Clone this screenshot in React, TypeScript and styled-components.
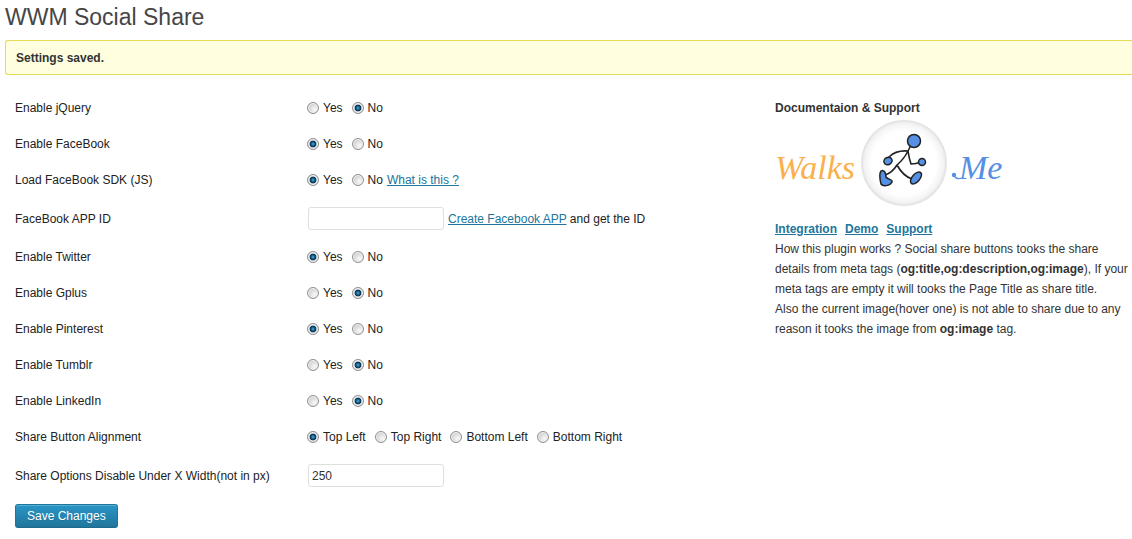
import React from "react";
import styled, { createGlobalStyle } from "styled-components";

const GlobalStyle = createGlobalStyle`
  *, *::before, *::after { box-sizing: border-box; }
  body {
    margin: 0;
    background: #fff;
    color: #333;
    font-family: "Liberation Sans", Arial, sans-serif;
    font-size: 12px;
    line-height: 20px;
  }
`;

const Page = styled.main`
  padding-left: 5px;
  overflow-x: hidden;
`;

const Title = styled.h1`
  margin: 0;
  padding-top: 2px;
  color: #464646;
  font-size: 23px;
  line-height: 30px;
  font-weight: 400;
`;

const Notice = styled.p`
  margin: 8px 0 15px;
  padding: 7px 10px 6px;
  border: 1px solid #e6db55;
  border-right: 0;
  border-radius: 3px 0 0 3px;
  background: #ffffe0;
  font-weight: 700;
`;

const Columns = styled.div`
  display: grid;
  grid-template-columns: 760fr 357fr;
  padding-left: 10px;
`;

const Row = styled.div<{ $tall?: boolean }>`
  display: grid;
  grid-template-columns: 292px 1fr;
  align-items: center;
  min-height: ${({ $tall }) => ($tall ? 41 : 36)}px;
  color: #222;
`;

const RowName = styled.div``;

const Field = styled.div`
  display: flex;
  align-items: center;
`;

const Option = styled.label`
  display: flex;
  align-items: center;
  gap: 4px;
  margin-right: 9px;

  &:last-of-type {
    margin-right: 4px;
  }
`;

const Radio = styled.input`
  appearance: none;
  width: 12px;
  height: 12px;
  margin: 0;
  border: 1px solid #8e8f8f;
  border-radius: 50%;
  background: radial-gradient(circle at 65% 65%, #f4f4f4 10%, #d2d4d6 60%);
  box-shadow: inset 0 0 0 1px #f4f4f4;

  &:checked {
    background: radial-gradient(
      circle closest-side at 50% 50%,
      #4fb4e0 0,
      #1a76a6 25%,
      #0d2f4a 58%,
      #c9d2d8 74%
    );
  }
`;

const TextInput = styled.input`
  width: 136px;
  height: 23px;
  margin: 0 4px 0 1px;
  padding: 2px 3px;
  border: 1px solid #dfdfdf;
  border-radius: 3px;
  background: #fff;
  color: #333;
  font: inherit;
  line-height: 16px;
`;

const Link = styled.a`
  color: #21759b;
`;

const Save = styled.button`
  height: 24px;
  margin: 8px 0;
  padding: 0 11px;
  border: 1px solid #21759b;
  border-bottom-color: #1e6a8d;
  border-radius: 3px;
  background: linear-gradient(#2a95c5, #21759b);
  box-shadow: inset 0 1px 0 rgba(120, 200, 230, 0.5);
  color: #fff;
  font: inherit;
  line-height: 22px;
  text-shadow: 0 1px 0 rgba(0, 0, 0, 0.1);
`;

const Aside = styled.aside`
  padding-top: 8px;
`;

const AsideTitle = styled.h2`
  margin: 0;
  font-size: 12px;
  line-height: 20px;
`;

const Logo = styled.svg`
  display: block;
  width: 230px;
  height: 90px;
  margin: 1px 0 10px;
`;

const LogoWord = styled.text`
  font-family: "Liberation Serif", serif;
  font-size: 34px;
  font-style: italic;
`;

const Links = styled.nav`
  display: flex;
  gap: 8px;
  font-weight: 700;
`;

const About = styled.p`
  margin: 0;
`;

type Setting = {
  id: string;
  name: string;
  options?: string[];
  selected?: string;
  value?: string;
  extra?: React.ReactNode;
};

const yesNo = ["Yes", "No"];

const settings: Setting[] = [
  { id: "jquery", name: "Enable jQuery", options: yesNo, selected: "No" },
  { id: "facebook", name: "Enable FaceBook", options: yesNo, selected: "Yes" },
  {
    id: "sdk",
    name: "Load FaceBook SDK (JS)",
    options: yesNo,
    selected: "Yes",
    extra: <Link href="#sdk">What is this ?</Link>,
  },
  {
    id: "appid",
    name: "FaceBook APP ID",
    value: "",
    extra: (
      <span>
        <Link href="#create">Create Facebook APP</Link> and get the ID
      </span>
    ),
  },
  { id: "twitter", name: "Enable Twitter", options: yesNo, selected: "Yes" },
  { id: "gplus", name: "Enable Gplus", options: yesNo, selected: "No" },
  { id: "pinterest", name: "Enable Pinterest", options: yesNo, selected: "Yes" },
  { id: "tumblr", name: "Enable Tumblr", options: yesNo, selected: "No" },
  { id: "linkedin", name: "Enable LinkedIn", options: yesNo, selected: "No" },
  {
    id: "align",
    name: "Share Button Alignment",
    options: ["Top Left", "Top Right", "Bottom Left", "Bottom Right"],
    selected: "Top Left",
  },
  { id: "width", name: "Share Options Disable Under X Width(not in px)", value: "250" },
];

function SettingRow({ id, name, options, selected, value, extra }: Setting) {
  if (!options) {
    return (
      <Row $tall>
        <RowName as="label" htmlFor={id}>{name}</RowName>
        <Field>
          <TextInput id={id} type="text" defaultValue={value} />
          {extra}
        </Field>
      </Row>
    );
  }
  return (
    <Row role="radiogroup" aria-labelledby={id}>
      <RowName id={id}>{name}</RowName>
      <Field>
        {options.map((option) => (
          <Option key={option}>
            <Radio type="radio" name={id} value={option} defaultChecked={option === selected} />
            {option}
          </Option>
        ))}
        {extra}
      </Field>
    </Row>
  );
}

function WalksMeLogo() {
  return (
    <Logo viewBox="0 0 230 90" role="img" aria-label="Walks Me">
      <defs>
        <radialGradient id="disc">
          <stop offset="0.75" stopColor="#fff" />
          <stop offset="0.92" stopColor="#f3f3f3" />
          <stop offset="1" stopColor="#dedede" />
        </radialGradient>
      </defs>
      <LogoWord x="0" y="60" fill="#fbb04c">Walks</LogoWord>
      <circle cx="129" cy="44" r="43" fill="url(#disc)" />
      <path
        d="M136 26 L133 32 M133 32 Q121 31 114 38 M133 32 Q134 39 136 45 Q141 45 146 43 M133 32 Q129 40 122 46 Q117 54 110 56 M122 46 Q128 57 137 60"
        fill="none"
        stroke="#222"
        strokeWidth="1.6"
        strokeLinecap="round"
      />
      <g fill="#5590e4" stroke="#222" strokeWidth="1.5">
        <circle cx="139" cy="22" r="6.5" />
        <ellipse cx="113" cy="42" rx="4.2" ry="3.6" transform="rotate(-25 113 42)" />
        <circle cx="147" cy="43" r="3.5" />
        <path d="M106 52 C109 50 111 54 111 58 C113 61 118 60 117 63 C115 67 108 68 106 65 C105 61 104 55 106 52 Z" />
        <ellipse cx="141" cy="59" rx="7.2" ry="3.8" transform="rotate(-49 141 59)" />
      </g>
      <path
        d="M179 57 Q182 61 187 59"
        fill="none"
        stroke="#5590e4"
        strokeWidth="1.3"
        strokeLinecap="round"
      />
      <circle cx="179" cy="56" r="2.2" fill="#5590e4" />
      <LogoWord x="184" y="60" fill="#5590e4">Me</LogoWord>
    </Logo>
  );
}

export default function App() {
  return (
    <>
      <GlobalStyle />
      <Page>
        <Title>WWM Social Share</Title>
        <Notice role="status">Settings saved.</Notice>
        <Columns>
          <form onSubmit={(event) => event.preventDefault()}>
            {settings.map((setting) => (
              <SettingRow key={setting.id} {...setting} />
            ))}
            <Save type="submit">Save Changes</Save>
          </form>
          <Aside>
            <AsideTitle>Documentaion &amp; Support</AsideTitle>
            <WalksMeLogo />
            <Links aria-label="Plugin">
              <Link href="#integration">Integration</Link>
              <Link href="#demo">Demo</Link>
              <Link href="#support">Support</Link>
            </Links>
            <About>
              How this plugin works ? Social share buttons tooks the share details from meta tags (
              <b>og:title,og:description,og:image</b>), If your meta tags are empty it will tooks
              the Page Title as share title.
              <br />
              Also the current image(hover one) is not able to share due to any reason it tooks the
              image from <b>og:image</b> tag.
            </About>
          </Aside>
        </Columns>
      </Page>
    </>
  );
}
